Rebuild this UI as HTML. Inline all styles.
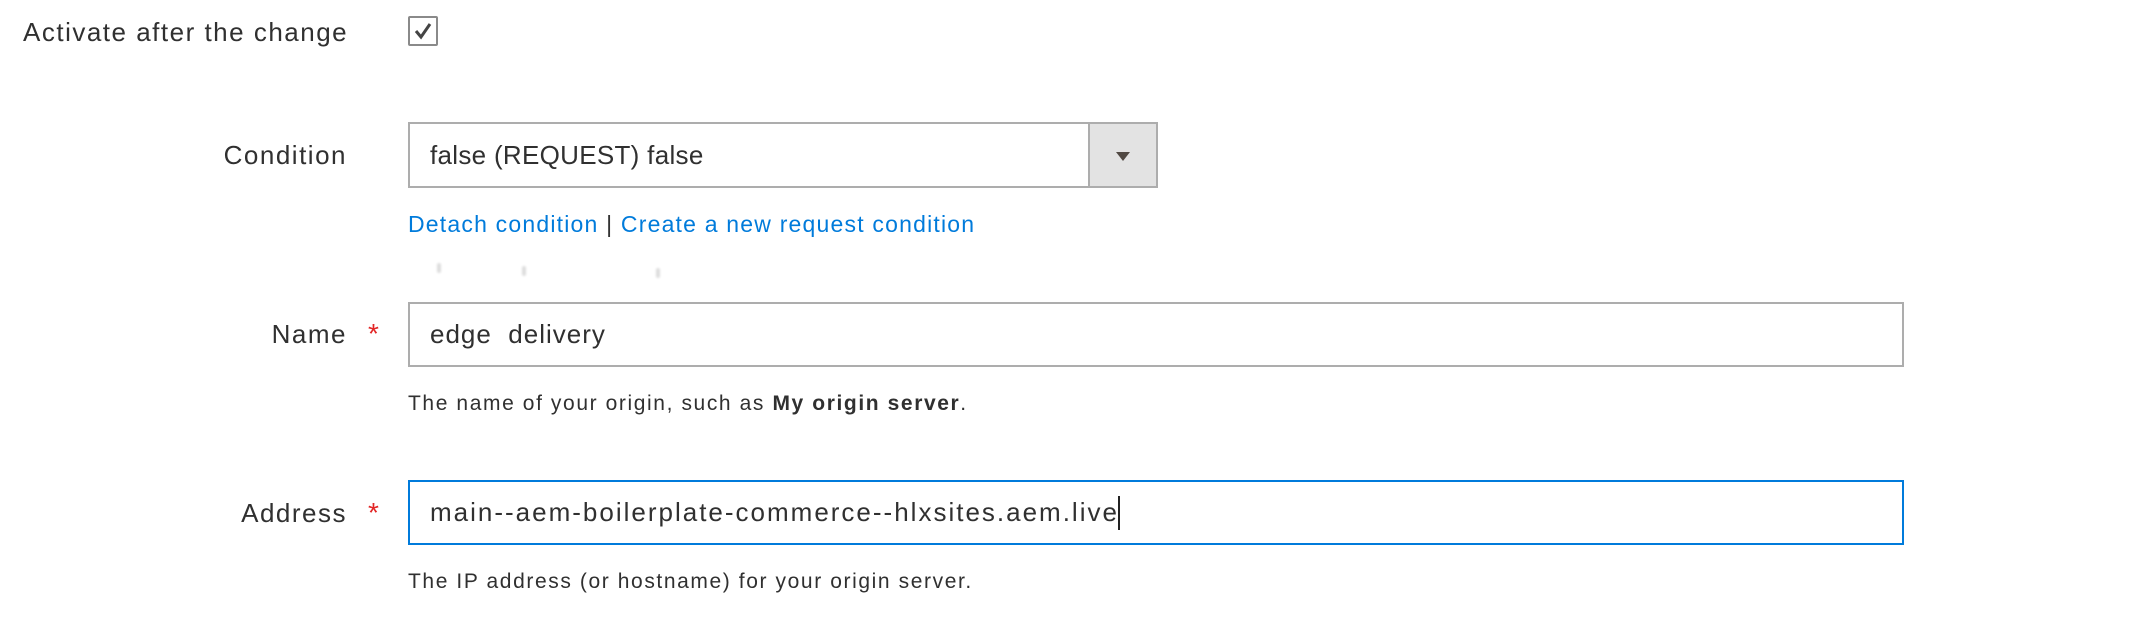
<!DOCTYPE html>
<html><head><meta charset="utf-8"><style>
html,body{margin:0;padding:0;background:#fff;width:2152px;height:636px;overflow:hidden;font-family:"Liberation Sans","DejaVu Sans",sans-serif;color:#303030;}
.abs{position:absolute;}
.lbl{font-size:26px;color:#303030;text-align:right;width:347px;left:0;letter-spacing:1.5px;}
.inp{position:absolute;left:408px;box-sizing:border-box;border:2px solid #adadad;background:#fff;font-size:26px;color:#303030;padding-left:20px;display:flex;align-items:center;}
.help{font-size:21px;color:#303030;left:408px;letter-spacing:1.6px;}
.star{color:#e22626;font-size:28px;left:368px;}
</style></head><body>
<div class="abs" style="left:23px;top:15px;font-size:26px;line-height:34px;letter-spacing:1.5px;">Activate after the change</div>
<div class="abs" style="left:408px;top:16px;width:26px;height:26px;border:2px solid #8a8a8a;border-radius:2px;background:#fff;">
<svg width="26" height="26" viewBox="0 0 26 26"><path d="M6 13 L11 19 L20 6" fill="none" stroke="#444" stroke-width="3"/></svg></div>

<div class="abs lbl" style="top:138px;line-height:34px;">Condition</div>
<div class="inp" style="top:122px;width:750px;height:66px;letter-spacing:0.3px;">false (REQUEST) false
<div class="abs" style="right:0;top:0;width:66px;height:62px;background:#e3e3e3;border-left:2px solid #adadad;">
<svg width="66" height="62"><polygon points="26,28 40,28 33,37" fill="#514943"/></svg></div></div>

<div class="abs" style="left:408px;top:209px;font-size:23px;line-height:30px;color:#333;letter-spacing:1.2px;"><span style="color:#007bdb">Detach condition</span> | <span style="color:#007bdb">Create a new request condition</span></div>
<div class="abs" style="left:437px;top:263px;width:4px;height:10px;background:#ddd;border-radius:2px;filter:blur(1px)"></div>
<div class="abs" style="left:522px;top:266px;width:4px;height:10px;background:#ddd;border-radius:2px;filter:blur(1px)"></div>
<div class="abs" style="left:656px;top:268px;width:4px;height:10px;background:#ddd;border-radius:2px;filter:blur(1px)"></div>

<div class="abs lbl" style="top:317px;line-height:34px;">Name</div>
<div class="abs star" style="top:318px;">*</div>
<div class="inp" style="top:302px;width:1496px;height:65px;letter-spacing:1px;">edge&nbsp; delivery</div>
<div class="abs help" style="top:390px;line-height:28px;">The name of your origin, such as <b>My origin server</b>.</div>

<div class="abs lbl" style="top:496px;line-height:34px;">Address</div>
<div class="abs star" style="top:497px;">*</div>
<div class="inp" style="top:480px;width:1496px;height:65px;border-color:#007bdb;letter-spacing:2px;">main--aem-boilerplate-commerce--hlxsites.aem.live<span style="display:inline-block;width:2px;height:34px;background:#222;margin-left:-1px;"></span></div>
<div class="abs help" style="top:568px;line-height:28px;">The IP address (or hostname) for your origin server.</div>
</body></html>
